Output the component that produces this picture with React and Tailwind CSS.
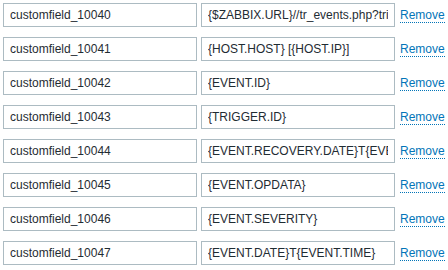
const rows = [
  ['customfield_10040', '{$ZABBIX.URL}//tr_events.php?triggerid={TRIGGER.ID}&eventid={EVENT.ID}'],
  ['customfield_10041', '{HOST.HOST} [{HOST.IP}]'],
  ['customfield_10042', '{EVENT.ID}'],
  ['customfield_10043', '{TRIGGER.ID}'],
  ['customfield_10044', '{EVENT.RECOVERY.DATE}T{EVENT.RECOVERY.TIME}'],
  ['customfield_10045', '{EVENT.OPDATA}'],
  ['customfield_10046', '{EVENT.SEVERITY}'],
  ['customfield_10047', '{EVENT.DATE}T{EVENT.TIME}'],
];

export default function App() {
  return (
    <div className="w-[448px] h-[270px] bg-white pt-[3px] pl-[3px] flex flex-col gap-[10px] font-['Liberation_Sans',Arial,sans-serif] text-[12px] text-[#1f2c33]">
      {rows.map(([name, value]) => (
        <div key={name} className="flex items-center">
          <input
            readOnly
            value={name}
            className="w-[194px] h-[24px] border border-[#acbbc2] bg-white px-[6px] outline-none text-[#1f2c33]"
          />
          <input
            readOnly
            value={value}
            className="ml-[4px] w-[194px] h-[24px] border border-[#acbbc2] bg-white px-[6px] outline-none text-[#1f2c33]"
          />
          <span className="ml-[5px] text-[#0275b8] leading-[14px] border-b border-dotted border-[#0275b8]">
            Remove
          </span>
        </div>
      ))}
    </div>
  );
}
